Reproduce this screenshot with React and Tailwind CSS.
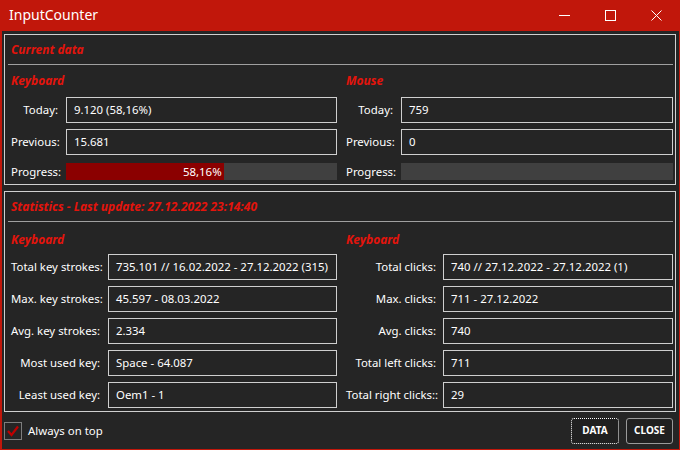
import React from 'react'

const font = { fontFamily: '"Noto Sans", "Open Sans", sans-serif' }

function Field({ children }) {
  return (
    <div className="h-[26px] flex-1 min-w-0 border border-[#cfcfcf] px-[7px] flex items-center text-[11.4px] text-white whitespace-nowrap overflow-hidden">
      {children}
    </div>
  )
}

function Row({ label, width, gap, children }) {
  return (
    <div className="flex items-center" style={{ gap }}>
      <div className="shrink-0 text-right text-[11.4px] text-white whitespace-nowrap" style={{ width }}>
        {label}
      </div>
      {children}
    </div>
  )
}

function Header({ children }) {
  return <div className="h-[29px] flex items-center pl-[6px] text-[12px] font-bold italic text-[#e3140c]">{children}</div>
}

function SubHeader({ children }) {
  return <div className="h-[32px] flex items-center text-[12px] font-bold italic text-[#e3140c]">{children}</div>
}

function Progress({ value, label }) {
  return (
    <div className="relative h-[17px] flex-1 bg-[#404040]">
      <div className="h-full bg-[#8b0000]" style={{ width: `${value}%` }} />
      {label && (
        <div className="absolute inset-y-0 left-0 flex items-center justify-end pr-[2px] text-[11.4px] text-white" style={{ width: `${value}%` }}>
          {label}
        </div>
      )}
    </div>
  )
}

export default function App() {
  const kbStats = [
    ['Total key strokes:', '735.101 // 16.02.2022 - 27.12.2022 (315)'],
    ['Max. key strokes:', '45.597 - 08.03.2022'],
    ['Avg. key strokes:', '2.334'],
    ['Most used key:', 'Space - 64.087'],
    ['Least used key:', 'Oem1 - 1'],
  ]
  const mouseStats = [
    ['Total clicks:', '740 // 27.12.2022 - 27.12.2022 (1)'],
    ['Max. clicks:', '711 - 27.12.2022'],
    ['Avg. clicks:', '740'],
    ['Total left clicks:', '711'],
    ['Total right clicks::', '29'],
  ]

  return (
    <div className="w-[680px] h-[450px] bg-[#c1170b] flex flex-col overflow-hidden" style={font}>
      {/* title bar */}
      <div className="h-[31px] shrink-0 flex items-center text-white">
        <div className="pl-[9px] text-[14px] flex-1 leading-none pb-[1px]">InputCounter</div>
        <div className="flex items-center h-full pr-[1px]">
          <div className="w-[46px] h-full flex items-center justify-center">
            <svg width="11" height="11" viewBox="0 0 11 11"><line x1="0" y1="5.5" x2="11" y2="5.5" stroke="white" strokeWidth="1" /></svg>
          </div>
          <div className="w-[46px] h-full flex items-center justify-center">
            <svg width="11" height="11" viewBox="0 0 11 11"><rect x="0.5" y="0.5" width="10" height="10" fill="none" stroke="white" strokeWidth="1" /></svg>
          </div>
          <div className="w-[46px] h-full flex items-center justify-center">
            <svg width="11" height="11" viewBox="0 0 11 11"><path d="M0.5 0.5 L10.5 10.5 M10.5 0.5 L0.5 10.5" stroke="white" strokeWidth="1" /></svg>
          </div>
        </div>
      </div>

      {/* content */}
      <div className="flex-1 ml-[2px] mr-[1px] mb-[1px] bg-[#252525] flex flex-col pl-[2px] pr-[3px] pt-[3px]">
        {/* current data */}
        <div className="w-[672px] h-[151px] border border-[#d0d0d0] flex flex-col">
          <Header>Current data</Header>
          <div className="ml-[3px] mr-[2px] h-px bg-[#a0a0a0]" />
          <div className="grid grid-cols-[326px_327px] gap-x-[9px] pl-[6px] pr-[2px]">
            <div className="flex flex-col">
              <SubHeader>Keyboard</SubHeader>
              <div className="flex flex-col gap-[6px]">
                <Row label="Today:" width={47} gap={8}><Field>9.120 (58,16%)</Field></Row>
                <Row label="Previous:" width={47} gap={8}><Field>15.681</Field></Row>
              </div>
              <div className="mt-[8px]">
                <Row label="Progress:" width={47} gap={8}><Progress value={58.16} label="58,16%" /></Row>
              </div>
            </div>
            <div className="flex flex-col">
              <SubHeader>Mouse</SubHeader>
              <div className="flex flex-col gap-[6px]">
                <Row label="Today:" width={47} gap={8}><Field>759</Field></Row>
                <Row label="Previous:" width={47} gap={8}><Field>0</Field></Row>
              </div>
              <div className="mt-[8px]">
                <Row label="Progress:" width={47} gap={8}><Progress value={0} /></Row>
              </div>
            </div>
          </div>
        </div>

        {/* statistics */}
        <div className="mt-[6px] w-[672px] h-[221px] border border-[#d0d0d0] flex flex-col">
          <Header>Statistics - Last update: 27.12.2022 23:14:40</Header>
          <div className="ml-[3px] mr-[2px] h-px bg-[#a0a0a0]" />
          <div className="grid grid-cols-[326px_327px] gap-x-[9px] pl-[6px] pr-[2px]">
            <div className="flex flex-col">
              <div className="pt-[2px]"><SubHeader>Keyboard</SubHeader></div>
              <div className="flex flex-col gap-[6px] -mt-[2px]">
                {kbStats.map(([l, v]) => (
                  <Row key={l} label={l} width={89} gap={8}><Field>{v}</Field></Row>
                ))}
              </div>
            </div>
            <div className="flex flex-col">
              <div className="pt-[2px]"><SubHeader>Keyboard</SubHeader></div>
              <div className="flex flex-col gap-[6px] -mt-[2px]">
                {mouseStats.map(([l, v]) => (
                  <Row key={l} label={l} width={90} gap={7}><Field>{v}</Field></Row>
                ))}
              </div>
            </div>
          </div>
        </div>

        {/* bottom bar */}
        <div className="flex-1 flex items-center">
          <div className="w-[18px] h-[18px] border border-[#7d7d7d] flex items-center justify-center">
            <svg width="14" height="14" viewBox="0 0 14 14">
              <path d="M2 7 L5.5 11 L12 2.5" fill="none" stroke="#c00000" strokeWidth="2.2" />
            </svg>
          </div>
          <div className="ml-[6px] text-[11.4px] text-white flex-1">Always on top</div>
          <div className="flex items-center gap-[7px] pr-[3px]">
            <div className="w-[48px] h-[26px] rounded-[3px] border border-dotted border-white flex items-center justify-center text-[10px] font-bold text-white bg-[#202020]">
              DATA
            </div>
            <div className="w-[47px] h-[26px] rounded-[3px] border border-[#9a9a9a] flex items-center justify-center text-[10px] font-bold text-white bg-[#202020]">
              CLOSE
            </div>
          </div>
        </div>
      </div>
    </div>
  )
}
